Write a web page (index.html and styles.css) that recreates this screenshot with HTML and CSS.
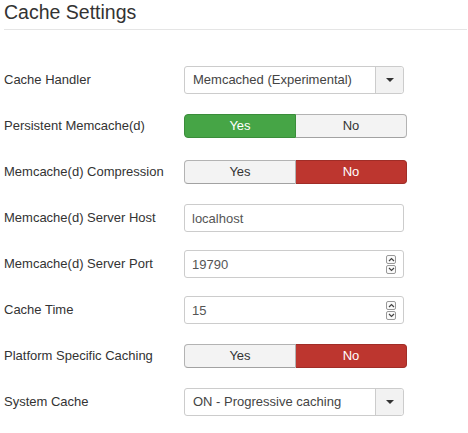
FILE: index.html
```html
<!DOCTYPE html>
<html>
<head>
<meta charset="utf-8">
<link rel="stylesheet" href="styles.css">
</head>
<body>
<h2 class="title">Cache Settings</h2>
<form class="form">
  <div class="row">
    <label class="label">Cache Handler</label>
    <div class="select"><span class="select-text">Memcached (Experimental)</span><span class="select-btn"><span class="caret"></span></span></div>
  </div>
  <div class="row">
    <label class="label">Persistent Memcache(d)</label>
    <div class="toggle"><span class="tbtn yes-on">Yes</span><span class="tbtn">No</span></div>
  </div>
  <div class="row">
    <label class="label">Memcache(d) Compression</label>
    <div class="toggle"><span class="tbtn">Yes</span><span class="tbtn no-on">No</span></div>
  </div>
  <div class="row">
    <label class="label">Memcache(d) Server Host</label>
    <div class="field"><input class="input" type="text" value="localhost"></div>
  </div>
  <div class="row">
    <label class="label">Memcache(d) Server Port</label>
    <div class="field"><input class="input" type="text" value="19790"><span class="spin"><span class="sbox"><svg width="7" height="5" viewBox="0 0 7 5"><path d="M1 4 L3.5 1.5 L6 4" fill="none" stroke="#444" stroke-width="1.2"/></svg></span><span class="sbox"><svg width="7" height="5" viewBox="0 0 7 5"><path d="M1 1 L3.5 3.5 L6 1" fill="none" stroke="#444" stroke-width="1.2"/></svg></span></span></div>
  </div>
  <div class="row">
    <label class="label">Cache Time</label>
    <div class="field"><input class="input" type="text" value="15"><span class="spin"><span class="sbox"><svg width="7" height="5" viewBox="0 0 7 5"><path d="M1 4 L3.5 1.5 L6 4" fill="none" stroke="#444" stroke-width="1.2"/></svg></span><span class="sbox"><svg width="7" height="5" viewBox="0 0 7 5"><path d="M1 1 L3.5 3.5 L6 1" fill="none" stroke="#444" stroke-width="1.2"/></svg></span></span></div>
  </div>
  <div class="row">
    <label class="label">Platform Specific Caching</label>
    <div class="toggle"><span class="tbtn">Yes</span><span class="tbtn no-on">No</span></div>
  </div>
  <div class="row">
    <label class="label">System Cache</label>
    <div class="select"><span class="select-text">ON - Progressive caching</span><span class="select-btn"><span class="caret"></span></span></div>
  </div>
</form>
</body>
</html>
```

FILE: styles.css
```css
html, body {
  margin: 0;
  background: #fff;
}
body {
  padding: 0 1px 0 4px;
  font-family: "Liberation Sans", Arial, sans-serif;
  font-size: 13px;
  color: #333;
}
.title {
  margin: 0;
  font-weight: normal;
  font-size: 19.5px;
  line-height: 24px;
  padding-bottom: 5px;
  border-bottom: 1px solid #e5e5e5;
  color: #333;
}
.form {
  margin: 0;
  padding-top: 27px;
}
.row {
  display: grid;
  grid-template-columns: 180px 1fr;
  height: 46px;
  align-items: center;
}
.label {
  color: #333;
  line-height: 18px;
}
.select {
  box-sizing: border-box;
  width: 220px;
  height: 28px;
  border: 1px solid #ccc;
  border-radius: 3px;
  display: flex;
  align-items: stretch;
  background: #fff;
}
.select-text {
  flex: 1;
  padding-left: 8px;
  line-height: 26px;
  color: #444;
}
.select-btn {
  width: 27px;
  border-left: 1px solid #ccc;
  background: #f2f2f2;
  border-radius: 0 3px 3px 0;
  display: flex;
  align-items: center;
  justify-content: center;
}
.caret {
  width: 0;
  height: 0;
  border-left: 4px solid transparent;
  border-right: 4px solid transparent;
  border-top: 4px solid #333;
}
.toggle {
  display: flex;
  width: 223px;
  height: 24px;
}
.tbtn {
  flex: 1;
  box-sizing: border-box;
  height: 24px;
  line-height: 22px;
  text-align: center;
  background: #f3f3f3;
  border: 1px solid #b3b3b3;
  border-bottom-color: #a2a2a2;
  color: #333;
}
.tbtn:first-child {
  border-radius: 4px 0 0 4px;
}
.tbtn:last-child {
  border-radius: 0 4px 4px 0;
  border-left: none;
}
.yes-on {
  background: #46a546;
  border-color: #3a8d3a;
  color: #fff;
}
.no-on {
  background: #bd362f;
  border-color: #a02d27;
  color: #fff;
}
.field {
  box-sizing: border-box;
  width: 220px;
  height: 28px;
  border: 1px solid #ccc;
  border-radius: 3px;
  display: flex;
  align-items: center;
  background: #fff;
}
.input {
  flex: 1;
  min-width: 0;
  border: none;
  outline: none;
  padding: 0 0 0 7px;
  height: 26px;
  font-family: "Liberation Sans", Arial, sans-serif;
  font-size: 13px;
  color: #555;
  background: transparent;
}
.spin {
  display: flex;
  flex-direction: column;
  margin-right: 7px;
}
.sbox {
  box-sizing: border-box;
  width: 10px;
  height: 9px;
  border: 1px solid #999;
  border-radius: 2px;
  display: flex;
  align-items: center;
  justify-content: center;
  background: #fafafa;
}
.sbox + .sbox {
  margin-top: 1px;
}
```
